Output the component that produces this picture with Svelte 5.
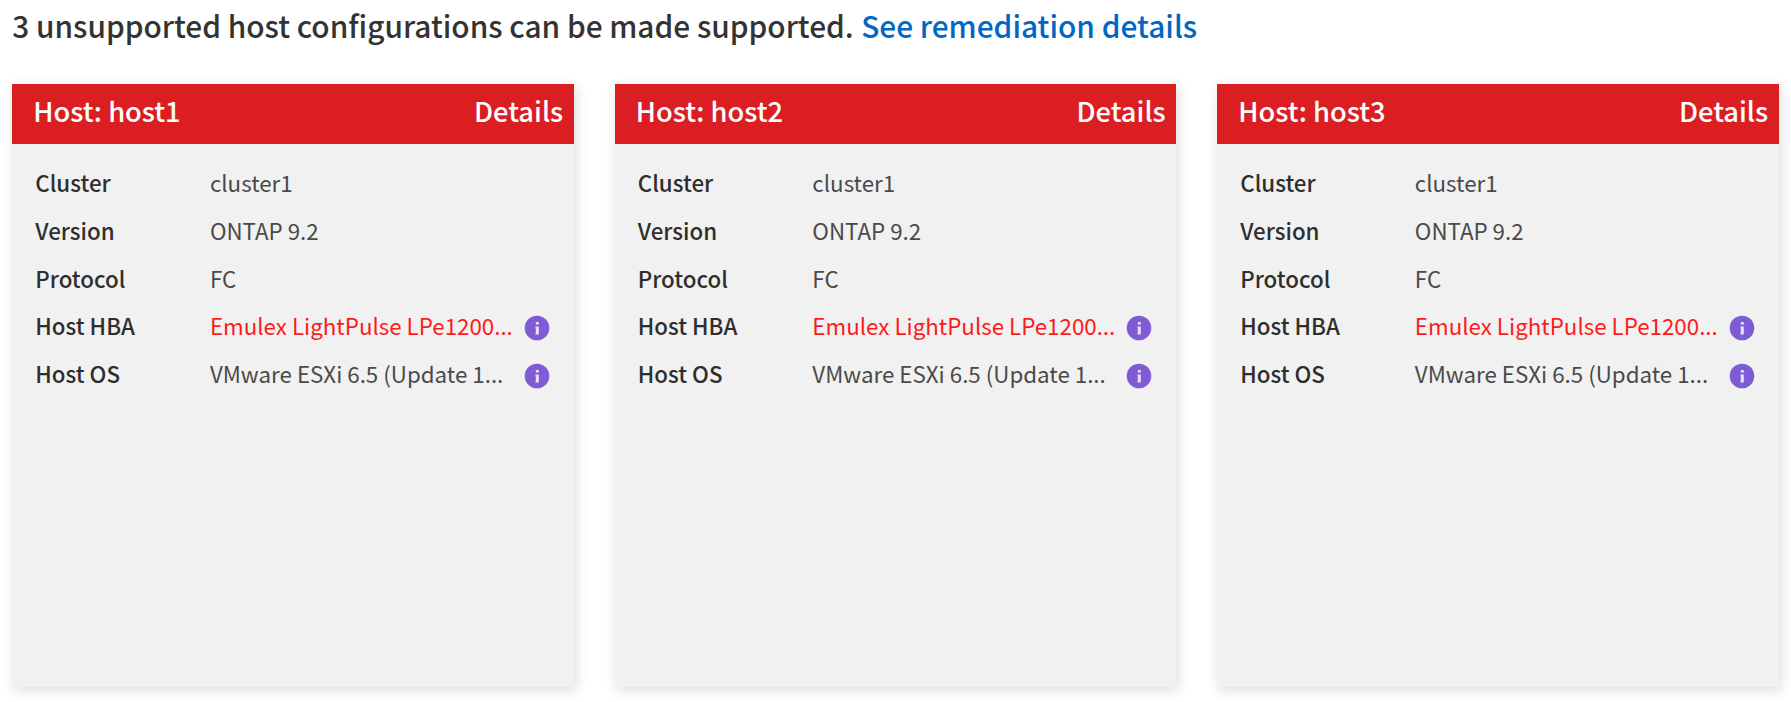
<script>
  const hosts = ['host1', 'host2', 'host3'];
  const rows = [
    { label: 'Cluster', value: 'cluster1' },
    { label: 'Version', value: 'ONTAP 9.2' },
    { label: 'Protocol', value: 'FC' },
    { label: 'Host HBA', value: 'Emulex LightPulse LPe1200...', info: true, error: true },
    { label: 'Host OS', value: 'VMware ESXi 6.5 (Update 1...', info: true }
  ];
</script>

<main>
  <h1>
    <span class="message">3 unsupported host configurations can be made supported.</span>
    <a href="#remediation">See remediation details</a>
  </h1>
  <div class="cards">
    {#each hosts as host}
      <section class="card">
        <header>
          <span class="name">Host: {host}</span>
          <span class="details">Details</span>
        </header>
        <dl>
          {#each rows as row}
            <div class="row">
              <dt>{row.label}</dt>
              <dd class:error={row.error}>{row.value}</dd>
              {#if row.info}
                <svg viewBox="0 0 26 26" width="26" height="26" aria-hidden="true">
                  <circle cx="13" cy="13" r="12.3" fill="#7f5bd5" />
                  <path
                    d="M11.9 6.9h2.9v2.6h-2.9zM11.3 11.6h3.5v7.8h-3.5v-1h.5v-5.8h-.5z"
                    fill="#e9e2f8"
                  />
                </svg>
              {/if}
            </div>
          {/each}
        </dl>
      </section>
    {/each}
  </div>
</main>

<style>
  :global(body) {
    background: #fff;
  }
  main {
    box-sizing: border-box;
    height: 702px;
    padding: 0 12.3px;
    overflow: hidden;
    font-family: 'Noto Sans CJK SC', 'Open Sans', sans-serif;
    color: #333;
    white-space: nowrap;
  }
  h1 {
    display: flex;
    gap: 7.5px;
    margin: 0;
    height: 84.4px;
    font-size: 29.83px;
    font-weight: 500;
    line-height: 50px;
  }
  a {
    color: #0067c5;
    text-decoration: none;
  }
  .cards {
    display: grid;
    grid-template-columns: repeat(3, 1fr);
    gap: 41px;
  }
  .card {
    height: 602.8px;
    background: #f1f1f1;
    box-shadow: 2px 3px 12px rgba(0, 0, 0, 0.14);
  }
  header {
    display: flex;
    justify-content: space-between;
    box-sizing: border-box;
    height: 59.3px;
    padding: 0 10.6px 0 21px;
    background: #da1e22;
    color: #fff;
    font-size: 27.3px;
    font-weight: 500;
    line-height: 52px;
  }
  dl {
    margin: 0;
    padding: 15.4px 23px;
  }
  .row {
    display: grid;
    grid-template-columns: 174.6px 313.9px 26px;
    align-items: center;
    height: 47.8px;
    font-size: 22.33px;
    line-height: 47.8px;
  }
  dt {
    font-weight: 500;
    color: #2e2e2e;
  }
  dd {
    margin: 0;
    color: #4a4a4a;
  }
  dd.error {
    color: #ff1a1a;
  }
  svg {
    margin-top: 2.8px;
  }
</style>
